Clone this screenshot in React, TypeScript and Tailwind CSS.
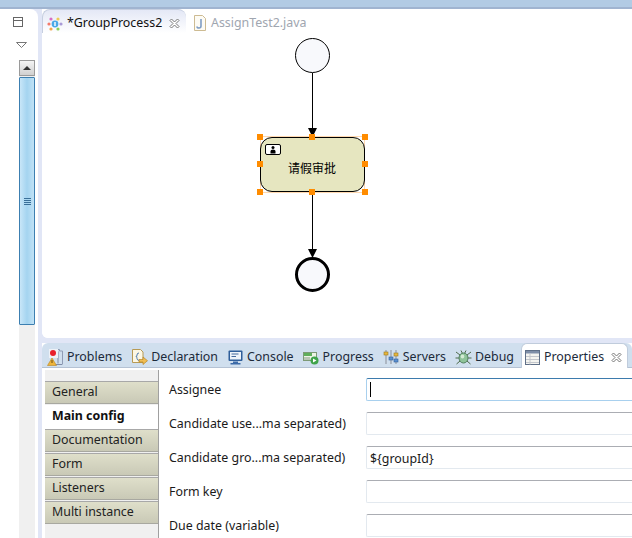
import type { ReactNode } from 'react'

const uiFont = 'font-["Noto_Sans","Liberation_Sans",sans-serif] text-[12.4px]'

function ProcessIcon() {
  return (
    <svg width="16" height="16" viewBox="0 0 16 16">
      <circle cx="2" cy="8" r="1.6" fill="#f47a6a" />
      <circle cx="4" cy="3" r="1.6" fill="#d66fc4" />
      <circle cx="11" cy="3" r="1.6" fill="#eecb55" />
      <circle cx="14" cy="8" r="1.6" fill="#a99ad8" />
      <circle cx="11" cy="13" r="1.6" fill="#8ccf5a" />
      <circle cx="4" cy="13" r="1.6" fill="#f2a64a" />
      <circle cx="8" cy="8" r="3.4" fill="#4aa8e8" />
      <rect x="7.3" y="6" width="1.4" height="4" fill="#fff" />
    </svg>
  )
}

function JavaIcon() {
  return (
    <svg width="12" height="16" viewBox="0 0 12 16">
      <path d="M.5.500h8l3 3v12H.5z" fill="#fdfbf4" stroke="#cdbb92" />
      <path d="M7 4v7q0 2-2 2t-2-1.500" fill="none" stroke="#7f9dc4" strokeWidth="1.600" />
    </svg>
  )
}

function CloseIcon() {
  return (
    <svg width="11" height="11" viewBox="0 0 11 11">
      <path
        d="M1 2.500L2.500 1L5.500 4L8.500 1L10 2.500L7 5.500L10 8.500L8.500 10L5.500 7L2.500 10L1 8.500L4 5.500Z"
        fill="#fff"
        stroke="#777"
      />
    </svg>
  )
}

function ProblemsIcon() {
  return (
    <svg width="17" height="18" viewBox="0 0 17 18">
      <path d="M3.500 1.500h9v1.500h3v13.500" fill="none" stroke="#8f9cb5" />
      <path d="M11 3.500v12M8 16.500h7" stroke="#7f8ca8" fill="none" />
      <rect x="2" y="1" width="9" height="9" fill="#eef1f6" />
      <circle cx="6" cy="5" r="3" fill="#e8202c" />
      <path d="M5 10L9.500 17.500H0.500Z" fill="#eeb43a" stroke="#b98520" strokeWidth=".6" />
      <rect x="4.500" y="12" width="1" height="3" fill="#6a4a10" />
    </svg>
  )
}

function DeclarationIcon() {
  return (
    <svg width="17" height="18" viewBox="0 0 17 18">
      <path d="M1.500 1.500h8l2.500 2.500v10.500h-10.500z" fill="#fdf7e3" stroke="#b79a55" />
      <path d="M8 5q-2 0-2 2t-1 1.500q1 .5 1 2t2 2" fill="none" stroke="#4a78b0" />
      <path d="M8 11.500h4V9l4.500 3.700L12 16.500V14H8z" fill="#f0bd52" stroke="#b8862a" strokeWidth=".7" />
    </svg>
  )
}

function ConsoleIcon() {
  return (
    <svg width="15" height="15" viewBox="0 0 15 15">
      <rect x=".5" y=".5" width="14" height="10.500" rx="1" fill="#2f5e9a" />
      <rect x="2" y="2" width="11" height="7.500" fill="#eef3fa" />
      <path d="M3.500 4h7M3.500 6.500h4.500" stroke="#456a9d" />
      <path d="M5 11.500h5v1.500h2.500v1.500h-10V13H5z" fill="#3b6aa8" />
    </svg>
  )
}

function ProgressIcon() {
  return (
    <svg width="16" height="15" viewBox="0 0 16 15">
      <rect x=".5" y="2.500" width="13" height="8" fill="#edf3e6" stroke="#7d9a76" />
      <rect x="1" y="3" width="8" height="3" fill="#5fae5a" />
      <rect x="1" y="7" width="6" height="3" fill="#b9c6b4" />
      <circle cx="11.500" cy="10.500" r="4" fill="#3fa34a" />
      <path d="M10 8.500l3.500 2-3.500 2z" fill="#fff" />
    </svg>
  )
}

function ServersIcon() {
  return (
    <svg width="16" height="16" viewBox="0 0 16 16">
      <path d="M3 1v14M8 1v14M13 1v14" stroke="#8b8f99" />
      <rect x="1" y="3" width="4" height="3" fill="#e7b73e" stroke="#9c7a20" strokeWidth=".6" />
      <rect x="6" y="8" width="4" height="3" fill="#5a8fd0" stroke="#33629c" strokeWidth=".6" />
      <rect x="11" y="4" width="4" height="3" fill="#e7b73e" stroke="#9c7a20" strokeWidth=".6" />
      <rect x="11" y="10" width="4" height="3" fill="#5a8fd0" stroke="#33629c" strokeWidth=".6" />
    </svg>
  )
}

function DebugIcon() {
  return (
    <svg width="17" height="17" viewBox="0 0 17 17">
      <path
        d="M1 3l4 3M16 3l-4 3M0.500 9h4M16.500 9h-4M1.500 15l3.500-3M15.500 15l-3.500-3M6 1.500l1.500 3M11 1.500l-1.500 3"
        stroke="#4e6b4b"
      />
      <ellipse cx="8.500" cy="9" rx="4.500" ry="5" fill="#8fc49a" stroke="#4f7d5c" />
      <ellipse cx="7.500" cy="7.500" rx="1.800" ry="2" fill="#d4ebd4" />
    </svg>
  )
}

function PropertiesIcon() {
  return (
    <svg width="15" height="15" viewBox="0 0 15 15">
      <rect x=".5" y=".5" width="14" height="14" fill="#f4f4f0" stroke="#5f6f87" />
      <rect x="1" y="1" width="13" height="2.500" fill="#7e8ea8" />
      <path d="M1 6.500h13M1 9.500h13M1 12.500h13M5 3.500v11" stroke="#c3c6cc" />
    </svg>
  )
}

function ViewTab({ icon, label }: { icon: ReactNode; label: string }) {
  return (
    <div className="flex h-full shrink-0 items-center gap-[3px] pl-[4px] pr-[5px] pt-[4px]">
      <span className="flex w-[17px] justify-center">{icon}</span>
      <span className="text-[#1c2a3a]">{label}</span>
    </div>
  )
}

function Handle({ className }: { className: string }) {
  return <div className={`absolute size-[6px] bg-[#ff8c00] ${className}`} />
}

function Diagram() {
  return (
    <div className="relative flex-1 bg-white">
      <svg className="absolute left-0 top-0" width="590" height="304" viewBox="0 0 590 304">
        <path d="M270.500 40V97M270.500 159V217" stroke="#000" />
        <path d="M266 95h9l-4.500 9zM266 216h9l-4.500 9z" fill="#000" />
      </svg>
      <div className="absolute left-[253px] top-[5px] size-[35px] rounded-full border border-black bg-[#f8f9fc]" />
      <div className="absolute left-[218px] top-[103px] h-[57px] w-[105px] border border-[#ffd9b0]" />
      <div className="absolute left-[218px] top-[104px] h-[55px] w-[105px] rounded-[12px] border border-black bg-[#e6e6c0]">
        <div className="absolute left-[4px] top-[6px] flex h-[11px] w-[16px] items-center justify-center rounded-[2px] border border-black bg-white">
          <svg width="6" height="8" viewBox="0 0 6 8">
            <circle cx="3" cy="1.500" r="1.500" fill="#000" />
            <path d="M.5 7.500V5q0-1.500 2.500-1.500T5.500 5v2.500z" fill="#000" />
          </svg>
        </div>
        <div className='flex h-full items-center justify-center pr-[1px] pt-[6px] font-["Noto_Sans_CJK_SC",sans-serif] text-[12px] text-black'>
          请假审批
        </div>
      </div>
      <Handle className="left-[215px] top-[101px]" />
      <Handle className="left-[267px] top-[101px]" />
      <Handle className="left-[320px] top-[101px]" />
      <Handle className="left-[215px] top-[128px]" />
      <Handle className="left-[320px] top-[128px]" />
      <Handle className="left-[215px] top-[156px]" />
      <Handle className="left-[267px] top-[156px]" />
      <Handle className="left-[320px] top-[156px]" />
      <div className="absolute left-[253px] top-[224px] size-[35px] rounded-full border-[3px] border-black bg-[#f8f9fc]" />
    </div>
  )
}

function SideItem({ label, active }: { label: string; active?: boolean }) {
  if (active) {
    return <div className="flex h-[24px] items-center bg-white pb-px pl-[7px] font-bold text-[#111]">{label}</div>
  }
  return (
    <div className="mb-px flex h-[23px] items-center border-b border-t border-b-[#a8a8a0] border-t-[#a8a8a8] bg-gradient-to-b from-[#dfdfca] to-[#c9c9b6] pl-[7px] text-[#222]">
      {label}
    </div>
  )
}

function Field({ label, value, active }: { label: string; value?: string; active?: boolean }) {
  return (
    <div className="flex h-[23px] items-center">
      <div className="w-[197px] shrink-0 pt-[2px] text-[#1a1a1a]">{label}</div>
      <div
        className={
          active
            ? 'flex h-full flex-1 items-center rounded-l-[2px] border border-r-0 border-[#a8d0ee] border-t-[#3d7bad] pl-[3px]'
            : 'flex h-full flex-1 items-center rounded-l-[2px] border border-r-0 border-[#e3e9ef] border-t-[#abadb3] pl-[3px] pt-[3px] text-[#1a1a1a]'
        }
      >
        {active ? <div className="h-[15px] w-px bg-black" /> : value}
      </div>
    </div>
  )
}

export default function App() {
  return (
    <div className={`flex h-[538px] w-[632px] flex-col overflow-hidden bg-[#e1e6f6] ${uiFont}`}>
      <div className="h-[9px] shrink-0 border-b-2 border-b-[#a0b4d0] bg-[#b2cbe4]" />

      <div className="flex min-h-0 flex-1">
        {/* minimized left stack */}
        <div className="flex w-[38px] shrink-0 flex-col rounded-tr-[8px] bg-white">
          <div className="ml-[13px] mt-[8px] h-[10px] w-[10px] border border-[#666]">
            <div className="mt-[2px] h-px bg-[#666]" />
          </div>
          <svg className="ml-[16px] mt-[15px]" width="11" height="6" viewBox="0 0 11 6">
            <path d="M.5.500h10L5.500 5.500z" fill="#fff" stroke="#777" />
          </svg>
          <div className="ml-[19px] mt-[12px] flex w-[16px] flex-1 flex-col bg-[#f0f0f0]">
            <div className="flex h-[16px] items-center justify-center border border-[#9a9a9a] bg-gradient-to-b from-[#f4f4f4] to-[#d0d0d0]">
              <div className="size-0 border-x-[4px] border-b-[4px] border-x-transparent border-b-[#333]" />
            </div>
            <div className="mt-px flex h-[248px] flex-col items-center justify-center rounded-[1px] border border-[#3c7fb1] bg-gradient-to-r from-[#c8e6f8] via-[#a4d4f0] to-[#c0e2f6]">
              <div className="flex flex-col gap-px">
                <div className="h-px w-[7px] bg-[#3a6f98]" />
                <div className="h-px w-[7px] bg-[#3a6f98]" />
                <div className="h-px w-[7px] bg-[#3a6f98]" />
                <div className="h-px w-[7px] bg-[#3a6f98]" />
              </div>
            </div>
          </div>
        </div>

        <div className="ml-[4px] flex min-w-0 flex-1 flex-col">
          {/* editor */}
          <div className="flex h-[329px] shrink-0 flex-col overflow-hidden rounded-bl-[6px] bg-white">
            <div className="flex h-[24px] shrink-0 items-center">
              <div className="flex h-full w-[144px] items-center rounded-t-[8px] border-l border-t border-[#c6cfe0] bg-gradient-to-b from-[#e4e8f6] to-white pl-[4px] pt-[4px]">
                <ProcessIcon />
                <span className="ml-[4px] text-[#111]">*GroupProcess2</span>
                <span className="ml-[7px] flex">
                  <CloseIcon />
                </span>
              </div>
              <div className="ml-[8px] flex items-center gap-[5px] pt-[4px]">
                <JavaIcon />
                <span className="text-[#a0a6b0]">AssignTest2.java</span>
              </div>
            </div>
            <Diagram />
          </div>

          {/* properties view */}
          <div className="mt-[5px] flex min-h-0 flex-1 flex-col bg-white">
            <div className="flex h-[25px] shrink-0 items-center rounded-t-[6px] border-b border-[#b4c2d4] bg-[#d0dfee] pl-[1px]">
              <ViewTab icon={<ProblemsIcon />} label="Problems" />
              <ViewTab icon={<DeclarationIcon />} label="Declaration" />
              <ViewTab icon={<ConsoleIcon />} label="Console" />
              <ViewTab icon={<ProgressIcon />} label="Progress" />
              <ViewTab icon={<ServersIcon />} label="Servers" />
              <ViewTab icon={<DebugIcon />} label="Debug" />
              <div className="ml-auto mr-[4px] flex h-[25px] w-[107px] shrink-0 items-center gap-[4px] self-start rounded-t-[6px] border-x border-t border-[#c0ccdc] bg-white pl-[3px] pt-[3px]">
                <PropertiesIcon />
                <span className="text-[#1c2a3a]">Properties</span>
                <span className="ml-[3px] flex">
                  <CloseIcon />
                </span>
              </div>
            </div>
            <div className="flex min-h-0 flex-1">
              <div className="ml-[3px] mt-[2px] flex w-[114px] shrink-0 flex-col border-r border-[#a0a0a0] bg-[#f0f0f0] pt-[11px]">
                <SideItem label="General" />
                <SideItem label="Main config" active />
                <SideItem label="Documentation" />
                <SideItem label="Form" />
                <SideItem label="Listeners" />
                <SideItem label="Multi instance" />
              </div>
              <div className="flex flex-1 flex-col gap-[11px] pl-[10px] pt-[10px]">
                <Field label="Assignee" active />
                <Field label="Candidate use...ma separated)" />
                <Field label="Candidate gro...ma separated)" value="${groupId}" />
                <Field label="Form key" />
                <Field label="Due date (variable)" />
              </div>
            </div>
          </div>
        </div>
      </div>
    </div>
  )
}
